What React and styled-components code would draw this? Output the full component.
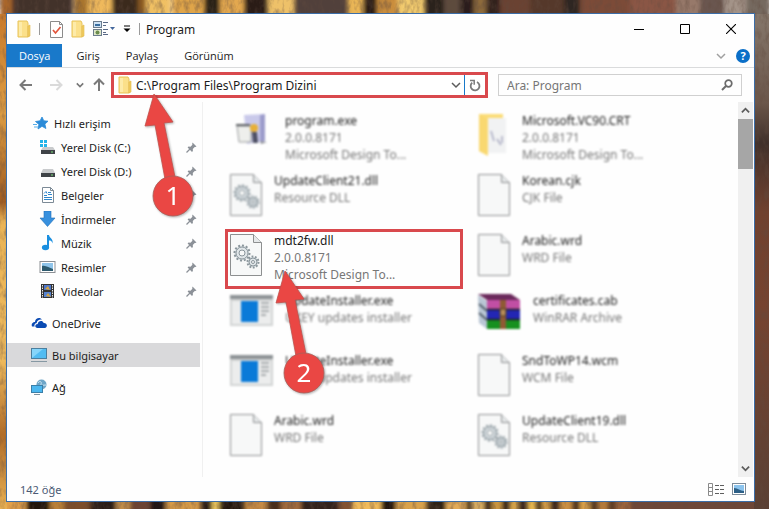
import React from "react";
// Import Styles
import styled, { createGlobalStyle } from "styled-components";

const BLUE = "#1979ca";
const RED = "#d9494d";

// Wallpaper stripes: [x, width, color]
const topStripes = [
  [0, 12, "#a8652a"], [12, 60, "#43332c"], [74, 18, "#a8742f"], [88, 24, "#efb95c"],
  [112, 26, "#3b2a1c"], [138, 14, "#8a5a22"], [146, 24, "#f0c063"], [172, 34, "#e0a548"],
  [204, 16, "#2c2018"], [220, 24, "#e3a850"], [244, 24, "#2a1c14"], [268, 26, "#eec169"],
  [294, 54, "#51403a"], [348, 15, "#eab656"], [363, 14, "#2a1a12"], [377, 22, "#c98d3d"],
  [398, 26, "#f2cb6e"], [424, 20, "#2b211c"], [444, 16, "#5d4b3c"], [460, 14, "#2b1f1a"],
  [474, 12, "#8d6a3a"], [486, 14, "#33241e"], [500, 30, "#6a4331"], [530, 34, "#54382c"],
  [564, 16, "#2f2521"], [580, 50, "#7c4b38"], [630, 46, "#8a5645"], [676, 24, "#97796a"],
  [700, 24, "#6a5750"], [724, 22, "#a39388"], [746, 23, "#75695f"],
];
const bottomStripes = [
  [0, 26, "#e2a04a"], [26, 24, "#23170f"], [50, 14, "#b98038"], [64, 26, "#7d4d2c"],
  [90, 26, "#2b1c14"], [116, 14, "#c08c48"], [130, 20, "#6d4230"], [150, 16, "#241812"],
  [166, 34, "#d59a48"], [200, 12, "#2b1e12"], [212, 7, "#edc85e"], [219, 26, "#20160f"],
  [245, 22, "#c58a44"], [267, 14, "#4a2f1c"], [281, 20, "#a06b3c"], [301, 38, "#33221a"],
  [339, 14, "#845230"], [353, 28, "#f0ba5a"], [381, 15, "#22160f"], [396, 30, "#d9a24c"],
  [426, 20, "#2e2018"], [446, 20, "#e2ab58"], [466, 6, "#36240f"], [472, 12, "#ddb163"],
  [484, 8, "#3a2818"], [492, 10, "#c99540"], [502, 8, "#2c1c12"], [510, 8, "#d8a64c"],
  [518, 10, "#35231a"], [528, 8, "#e8b850"], [536, 6, "#20140c"], [542, 8, "#d69f48"],
  [550, 10, "#3b271a"], [560, 12, "#ca8f42"], [572, 8, "#4b301c"], [580, 10, "#dba24c"],
  [590, 8, "#51341f"], [598, 10, "#b57c3b"], [608, 8, "#5c3a28"], [616, 14, "#a2663a"],
  [630, 139, "#6e4637"],
];

const Wallpaper = () => (
  <StyledWallpaper viewBox="0 0 769 509" preserveAspectRatio="none" aria-hidden="true">
    <defs>
      <linearGradient id="left" x2="0" y2="1">
        <stop offset="0" stopColor="#c87a2c" />
        <stop offset=".2" stopColor="#dc9c42" />
        <stop offset=".38" stopColor="#a05c20" />
        <stop offset=".42" stopColor="#eab456" />
        <stop offset=".7" stopColor="#edb95c" />
        <stop offset=".85" stopColor="#b06c28" />
        <stop offset="1" stopColor="#e8b052" />
      </linearGradient>
      <linearGradient id="right" x2="0" y2="1">
        <stop offset="0" stopColor="#85776b" />
        <stop offset=".18" stopColor="#6b564a" />
        <stop offset=".26" stopColor="#40302a" />
        <stop offset=".4" stopColor="#70412f" />
        <stop offset=".6" stopColor="#764330" />
        <stop offset="1" stopColor="#5a4034" />
      </linearGradient>
      <filter id="soft">
        <feGaussianBlur stdDeviation="2 0" />
      </filter>
      <filter id="fur" x="0" y="0" width="1" height="1">
        <feTurbulence type="fractalNoise" baseFrequency=".2 .1" numOctaves="3" seed="4" />
        <feColorMatrix values="0 0 0 0 .12  0 0 0 0 .07  0 0 0 0 .05  2.6 0 0 0 -1.1" />
      </filter>
    </defs>
    <g filter="url(#soft)">
      {topStripes.map(([x, w, c]) => (
        <rect key={x} x={x} width={w + 1} height="250" fill={c} />
      ))}
      {bottomStripes.map(([x, w, c]) => (
        <rect key={x} x={x} y="250" width={w + 1} height="259" fill={c} />
      ))}
    </g>
    <rect y="14" width="7" height="495" fill="url(#left)" />
    <rect x="754" y="14" width="15" height="495" fill="url(#right)" />
    <rect width="769" height="509" filter="url(#fur)" opacity=".4" />
  </StyledWallpaper>
);

// Icons
const FolderIcon = () => (
  <svg width="14" height="18" viewBox="0 0 14 18">
    <path d="M1 1h9l1 2v14H1z" fill="#fbe08a" stroke="#e8c35a" />
    <path d="M11 6l2-1v11l-2 1z" fill="#f3cf63" stroke="#dfb648" strokeWidth=".6" />
    <path d="M2 2h3v14H2z" fill="#fdeba9" />
  </svg>
);

const CheckDocIcon = () => (
  <svg width="13" height="17" viewBox="0 0 13 17">
    <path d="M.5.5h9l3 3v13H.5z" fill="#fff" stroke="#8b8b8b" />
    <path d="M9.500.5v3h3" fill="none" stroke="#8b8b8b" />
    <path d="M3 9l2.500 3L10.500 6" fill="none" stroke="#e2553c" strokeWidth="1.700" />
  </svg>
);

const PropertiesIcon = () => (
  <svg width="22" height="16" viewBox="0 0 22 16">
    <rect x=".5" y=".5" width="8" height="6" fill="#cfe3f5" stroke="#6c7c8c" />
    <rect x="2" y="3" width="5" height="2" fill="#3a6ea0" />
    <rect x=".5" y="8.500" width="8" height="6" fill="#dfe7c8" stroke="#6c7c8c" />
    <circle cx="4.500" cy="11.500" r="2" fill="#6b8c4c" />
    <path d="M10 1.500h5M10 4.500h3M10 8.500h5M10 13.500h5M10 11.500h3" stroke="#5a6a86" />
    <path d="M17 6h5l-2.500 3z" fill="#44679c" />
  </svg>
);

const CustomizeIcon = () => (
  <svg width="8" height="8" viewBox="0 0 8 8">
    <path d="M1 1h6" stroke="#000" />
    <path d="M.5 3.500h7L4 7z" fill="#000" />
  </svg>
);

const Chevron = ({ size = 10, color = "#5c5c5c", up, weight = 1.5 }) => (
  <svg width={size} height={size} viewBox="0 0 10 10">
    <path
      d={up ? "M1 7l4-4 4 4" : "M1 3l4 4 4-4"}
      fill="none"
      stroke={color}
      strokeWidth={weight}
    />
  </svg>
);

const Arrow = ({ color, turn = 0 }) => (
  <svg width="14" height="14" viewBox="0 0 14 14">
    <path
      d="M13 7H2M6.500 2L1.500 7l5 5"
      fill="none"
      stroke={color}
      strokeWidth="2"
      transform={`rotate(${turn} 7 7)`}
    />
  </svg>
);

const RefreshIcon = () => (
  <svg width="12" height="13" viewBox="0 0 12 13">
    <path d="M8 3A4.400 4.400 0 1 1 3.200 3.600" fill="none" stroke="#7a7a7a" strokeWidth="1.800" />
    <path d="M1 1.500h4.200v4.300" fill="none" stroke="#7a7a7a" strokeWidth="1.500" />
  </svg>
);

const SearchIcon = () => (
  <svg width="12" height="12" viewBox="0 0 12 12">
    <circle cx="7.500" cy="4.500" r="3.300" fill="none" stroke="#6b6b6b" strokeWidth="1.700" />
    <path d="M5 7L1 11" stroke="#6b6b6b" strokeWidth="2" />
  </svg>
);

const PinIcon = () => (
  <svg width="11" height="11" viewBox="0 0 11 11">
    <path d="M6.500.5l4 4-1.200.6-.6-.1-1.900 2 .1 2-.9.9L1.600 5.500l.9-.9 2 .1 1.900-1.900-.2-.8z" fill="#8c9198" />
    <path d="M4 7L.5 10.500" stroke="#8c9198" strokeWidth="1.200" />
  </svg>
);

const sideIcons = {
  star: (
    <>
      <path d="M10 2l1.800 3.800 4.200.4-3.100 2.900 1 4.400-3.900-2.200L6 14l.9-4.600L3.500 6.500l4.600-.7z" fill="#2b8bd8" stroke="#2b8bd8" strokeWidth=".8" />
      <path d="M1 9.500h4M2 12h4" stroke="#57aeea" />
    </>
  ),
  system: (
    <>
      <path d="M1 1h3v3H1zM5 1h3v3H5zM1 5h3v3H1zM5 5h3v3H5z" fill="#22b4ea" />
      <path d="M4 8h10l2 3H2z" fill="#c9cbcd" />
      <path d="M2 11h14v4H2z" fill="#3f4347" />
      <path d="M12 13h2" stroke="#7be07a" />
    </>
  ),
  disk: (
    <>
      <path d="M4 6h10l2 4H2z" fill="#c9cbcd" />
      <path d="M2 10h14v4H2z" fill="#3f4347" />
      <path d="M12 12h2" stroke="#7be07a" />
    </>
  ),
  docs: (
    <>
      <path d="M3.500.5h8l3 3v12h-11z" fill="#fff" stroke="#7c8a96" />
      <path d="M11.500.5v3h3" fill="none" stroke="#7c8a96" />
      <path d="M5 8.500h3M9 5.500h3M9 7.500h4M5 10.500h8M5 12.500h8M5 6.500l2-2 1 2" fill="none" stroke="#2f86cc" />
    </>
  ),
  down: <path d="M5 0h7v7h4l-7.500 8.500L1 7h4z" fill="#3790de" stroke="#2471b8" strokeWidth=".6" />,
  music: (
    <>
      <path d="M8 0h2c.3 3 4.500 3.500 3.500 8.500C13 6 11.500 5.500 10 5.500V12H8z" fill="#1a8fe0" />
      <ellipse cx="6.500" cy="12.500" rx="3.600" ry="2.700" fill="#1a8fe0" />
    </>
  ),
  pictures: (
    <>
      <rect x="1" y="2.500" width="15" height="11" fill="#fff" stroke="#8b8f94" />
      <rect x="3" y="4" width="11" height="8" fill="#8fc4ea" />
      <path d="M3 7c4-1 7 2 11 3v2H3z" fill="#2d5a6e" />
    </>
  ),
  videos: (
    <>
      <path d="M2 1h13v14H2z" fill="#333" />
      <path d="M5 2h7v5H5z" fill="#4f77c8" />
      <path d="M5 9h7v5H5z" fill="#5683cf" />
      <path d="M6 6l3-3 2 4zM7 13l2-3 3 4z" fill="#d7a43c" />
      <path d="M3.500 2v13M13.500 2v13" stroke="#e8e8e8" strokeDasharray="1.500 1" />
    </>
  ),
  onedrive: (
    <>
      <path d="M1 11.500c-1-3 1-4.500 3-4.500 0-4 5-5.500 7-2.500-3-.5-5 1-5.300 3.500C3.500 8.500 3 10 3.600 11.500z" fill="#0b4bb3" />
      <path d="M6.500 13c-3-.2-2.800-4 .2-4 .3-3.500 5-4.200 6-1 3.800-.3 4.300 4.600 1 5z" fill="#0b4bb3" />
    </>
  ),
  pc: (
    <>
      <rect x=".5" y="1.500" width="15" height="10" fill="#52bcf2" stroke="#4b7f9f" />
      <path d="M1 11V2h11z" fill="#86d5fa" />
      <path d="M0 14.500h16" stroke="#8698a3" />
    </>
  ),
  network: (
    <>
      <circle cx="10.500" cy="5.500" r="5" fill="#6ea6c8" />
      <path d="M7 4c2-3 4-1 3 1s3 1 5 1" fill="none" stroke="#d0e6f2" />
      <rect x=".5" y="6.500" width="11" height="7" fill="#4bb7ef" stroke="#3b7fa8" />
      <path d="M3 15.500h6" stroke="#7f929e" />
    </>
  ),
};

const SideIcon = ({ name }) => (
  <svg width="17" height="16" viewBox="0 0 17 16">
    {sideIcons[name]}
  </svg>
);

const Page = ({ children }) => (
  <svg width="32" height="43" viewBox="0 0 32 43">
    <path d="M.5.5h23l8 8v33H.5z" fill="#f7f8f8" stroke="#8d8f90" />
    <path d="M23.500.5v8h8" fill="#e6e9ea" stroke="#8d8f90" />
    {children}
  </svg>
);

const fileIcons = {
  page: <Page />,
  gears: (
    <Page>
      <g fill="#dfe5e8" stroke="#8b969c">
        <circle cx="12" cy="19" r="7.500" strokeWidth="2" strokeDasharray="2 1.900" />
        <circle cx="12" cy="19" r="6" />
        <circle cx="12" cy="19" r="3" fill="#f7f8f8" />
        <circle cx="23" cy="28" r="5.500" strokeWidth="2" strokeDasharray="1.800 1.600" />
        <circle cx="23" cy="28" r="4" />
        <circle cx="23" cy="28" r="1.500" fill="#f7f8f8" />
      </g>
    </Page>
  ),
  app: (
    <svg width="43" height="33" viewBox="0 0 43 33">
      <path d="M0 1h43v31H0z" fill="#d2d4d4" />
      <path d="M0 1h43v4H0z" fill="#8d9295" />
      <path d="M2 7h39v23H2z" fill="#eceded" />
      <path d="M11 7h17v21H11z" fill="#0a7ad8" />
      <path d="M31 9h8M31 13h8M31 17h8M31 21h5" stroke="#a9adaf" strokeWidth="2" />
    </svg>
  ),
  setup: (
    <svg width="43" height="33" viewBox="0 0 43 33">
      <path d="M14 1l21-1v27l-18 3z" fill="#c9c9ea" />
      <path d="M30 1l5-1v27l-5 1z" fill="#9c9ccb" />
      <path d="M7 12h14v16H9z" fill="#eeefec" stroke="#9a9c9e" />
      <path d="M6 11h14" stroke="#5f6266" strokeWidth="2" />
      <circle cx="24" cy="14" r="4" fill="#e8b038" />
      <path d="M22 18h5l1 11h-5z" fill="#4d4f63" />
      <path d="M30 27l7 1-6 2z" fill="#8b8d94" />
    </svg>
  ),
  folder: (
    <svg width="32" height="42" viewBox="0 0 32 42">
      <path d="M1 0h24v6H10v36l-9-5z" fill="#fbdc77" />
      <path d="M10 4h18v35H10z" fill="#f1f2f3" />
      <path d="M13 17l3 10M19 25l4 6M24 22v7" stroke="#a9abc2" strokeWidth="1.500" />
      <path d="M1 0l8 5v36l-8-4z" fill="#f9d870" />
    </svg>
  ),
  archive: (
    <svg width="43" height="36" viewBox="0 0 43 36">
      <path d="M0 0h33l9 6H9z" fill="#6b2a5c" />
      <path d="M0 1l9 6v28l-8-6z" fill="#b9c6d4" />
      <path d="M1 10l8 7M1 19l8 7" stroke="#54606c" strokeWidth="2" />
      <path d="M9 6h33v9H9z" fill="#c14fa4" />
      <path d="M9 16h33v9H9z" fill="#2326b4" />
      <path d="M9 26h33v9H9z" fill="#17901f" />
      <path d="M9 15.500h33M9 25.500h33" stroke="#222" strokeWidth="1.500" />
      <path d="M22 6h6v29h-6z" fill="#8f5a34" />
      <path d="M22 15h6v7h-6z" fill="#b98d58" stroke="#4c3a20" />
    </svg>
  ),
};

const Callout = ({ number, x, y }) => (
  <StyledCallout $x={x} $y={y} width="62" height="126" viewBox="0 0 62 126">
    <path
      d="M20 1L11 33l10-1 10 54 10-2-11-54 9-1z"
      fill="#ea4744"
      stroke="#c2504b"
      strokeWidth=".8"
    />
    <circle cx="39" cy="103" r="20" fill="#ea4744" stroke="#a8605a" strokeWidth=".8" />
    <text x="39" y="112" textAnchor="middle">
      {number}
    </text>
  </StyledCallout>
);

const quickAccess = [
  { icon: "system", name: "Yerel Disk (C:)" },
  { icon: "disk", name: "Yerel Disk (D:)" },
  { icon: "docs", name: "Belgeler" },
  { icon: "down", name: "İndirmeler" },
  { icon: "music", name: "Müzik" },
  { icon: "pictures", name: "Resimler" },
  { icon: "videos", name: "Videolar" },
];

const files = [
  { icon: "setup", name: "program.exe", info: ["2.0.0.8171", "Microsoft Design To..."] },
  { icon: "folder", name: "Microsoft.VC90.CRT", info: ["2.0.0.8171", "Microsoft Design To..."] },
  { icon: "gears", name: "UpdateClient21.dll", info: ["Resource DLL"] },
  { icon: "page", name: "Korean.cjk", info: ["CJK File"] },
  { icon: "gears", name: "mdt2fw.dll", info: ["2.0.0.8171", "Microsoft Design To..."], marked: true },
  { icon: "page", name: "Arabic.wrd", info: ["WRD File"] },
  { icon: "app", name: "UpdateInstaller.exe", info: ["UKEY updates installer"] },
  { icon: "archive", name: "certificates.cab", info: ["WinRAR Archive"] },
  { icon: "app", name: "UpdateInstaller.exe", info: ["UKEY updates installer"] },
  { icon: "page", name: "SndToWP14.wcm", info: ["WCM File"] },
  { icon: "page", name: "Arabic.wrd", info: ["WRD File"] },
  { icon: "gears", name: "UpdateClient19.dll", info: ["Resource DLL"] },
];

const App = () => {
  return (
    <Desktop>
      <GlobalStyle />
      <Wallpaper />
      <Window>
        <TitleBar>
          <QuickTools>
            <FolderIcon />
            <Separator />
            <ToolButton aria-label="Özellikler">
              <CheckDocIcon />
            </ToolButton>
            <ToolButton aria-label="Yeni klasör">
              <FolderIcon />
            </ToolButton>
            <ToolButton aria-label="Görünüm seçenekleri">
              <PropertiesIcon />
            </ToolButton>
            <ToolButton aria-label="Özelleştir">
              <CustomizeIcon />
            </ToolButton>
            <Separator />
          </QuickTools>
          <h1>Program</h1>
          <WindowButton aria-label="Simge durumuna küçült">
            <svg width="10" height="10" viewBox="0 0 10 10">
              <path d="M0 5.500h10" stroke="#000" />
            </svg>
          </WindowButton>
          <WindowButton aria-label="Ekranı kapla">
            <svg width="10" height="10" viewBox="0 0 10 10">
              <path d="M.5.5h9v9h-9z" fill="none" stroke="#000" />
            </svg>
          </WindowButton>
          <WindowButton aria-label="Kapat">
            <svg width="10" height="10" viewBox="0 0 10 10">
              <path d="M0 0l10 10M10 0L0 10" stroke="#000" strokeWidth="1.100" />
            </svg>
          </WindowButton>
        </TitleBar>

        <Ribbon>
          <Tab $file>Dosya</Tab>
          <Tab>Giriş</Tab>
          <Tab>Paylaş</Tab>
          <Tab>Görünüm</Tab>
          <RibbonTools>
            <ToolButton aria-label="Şeridi genişlet">
              <Chevron color="#a0a0a0" />
            </ToolButton>
            <HelpButton aria-label="Yardım">?</HelpButton>
          </RibbonTools>
        </Ribbon>

        <NavBar>
          <NavButtons>
            <ToolButton aria-label="Geri">
              <Arrow color="#7a7a7a" />
            </ToolButton>
            <ToolButton aria-label="İleri">
              <Arrow color="#dadada" turn={180} />
            </ToolButton>
            <ToolButton aria-label="Son konumlar">
              <Chevron size={8} color="#777" weight={2} />
            </ToolButton>
            <ToolButton aria-label="Yukarı">
              <Arrow color="#7a7a7a" turn={90} />
            </ToolButton>
          </NavButtons>
          <AddressBar>
            <FolderIcon />
            <input aria-label="Adres" defaultValue="C:\Program Files\Program Dizini" />
            <ToolButton aria-label="Önceki konumlar">
              <Chevron />
            </ToolButton>
            <RefreshButton aria-label="Yenile">
              <RefreshIcon />
            </RefreshButton>
            <Callout number="1" x={20} y={18} />
          </AddressBar>
          <SearchBar>
            <input aria-label="Ara" placeholder="Ara: Program" />
            <SearchIcon />
          </SearchBar>
        </NavBar>

        <Body>
          <Sidebar>
            <SideLink href="#quick">
              <SideIcon name="star" />
              <span>Hızlı erişim</span>
            </SideLink>
            {quickAccess.map(({ icon, name }) => (
              <SideLink href="#folder" key={name} $nested>
                <SideIcon name={icon} />
                <span>{name}</span>
                <PinIcon />
              </SideLink>
            ))}
            <SideLink href="#onedrive" $root>
              <SideIcon name="onedrive" />
              <span>OneDrive</span>
            </SideLink>
            <SideLink href="#pc" $root $active>
              <SideIcon name="pc" />
              <span>Bu bilgisayar</span>
            </SideLink>
            <SideLink href="#network" $root>
              <SideIcon name="network" />
              <span>Ağ</span>
            </SideLink>
          </Sidebar>
          <FileGrid>
            {files.map(({ icon, name, info, marked }, i) => (
              <FileItem key={i} $marked={marked}>
                {fileIcons[icon]}
                <div>
                  <h2>{name}</h2>
                  {info.map((line) => (
                    <p key={line}>{line}</p>
                  ))}
                </div>
                {marked && <Callout number="2" x={37} y={38} />}
              </FileItem>
            ))}
          </FileGrid>
          <ScrollBar>
            <button aria-label="Yukarı kaydır">
              <Chevron size={9} up weight={2} />
            </button>
            <div className="thumb"></div>
            <button aria-label="Aşağı kaydır">
              <Chevron size={9} weight={2} />
            </button>
          </ScrollBar>
        </Body>

        <StatusBar>
          <span>142 öğe</span>
          <ToolButton aria-label="Ayrıntılar">
            <svg width="17" height="13" viewBox="0 0 17 13">
              <path d="M.5.5h4v12h-4zM.5 4.500h4M.5 8.500h4" fill="none" stroke="#8a8a8a" />
              <path d="M7 2.500h4M12 2.500h4M7 6.500h4M12 6.500h4M7 10.500h4M12 10.500h4" stroke="#5e5e5e" />
            </svg>
          </ToolButton>
          <ToolButton aria-label="Büyük simgeler">
            <svg width="14" height="12" viewBox="0 0 14 12">
              <rect x=".5" y=".5" width="13" height="11" fill="#fff" stroke="#7d8c9a" />
              <path d="M2 2h10v8H2z" fill="#8cc4ee" />
              <path d="M2 5c4 0 6 3 10 3v2H2z" fill="#2c5f86" />
            </svg>
          </ToolButton>
        </StatusBar>
      </Window>
    </Desktop>
  );
};

const GlobalStyle = createGlobalStyle`
  * {
    margin: 0;
    padding: 0;
    box-sizing: border-box;
  }
  body, button, input {
    font-family: "Noto Sans", "Open Sans", sans-serif;
    font-size: 12px;
    color: #1c1c1c;
  }
  button, input {
    border: none;
    background: none;
    outline: none;
  }
  svg {
    display: block;
    flex-shrink: 0;
  }
`;

const Desktop = styled.div`
  position: relative;
  display: flex;
  min-height: 100vh;
  padding: 13px 14px 7px 6px;
`;
const StyledWallpaper = styled.svg`
  position: absolute;
  inset: 0;
  width: 100%;
  height: 100%;
`;
const Window = styled.main`
  position: relative;
  flex: 1;
  display: flex;
  flex-direction: column;
  min-width: 0;
  background: #fefefe;
  border: 1px solid #3c6ea8;
`;
const TitleBar = styled.header`
  display: flex;
  align-items: center;
  height: 30px;
  h1 {
    flex: 1;
    font-size: 12px;
    font-weight: 400;
  }
`;
const QuickTools = styled.div`
  display: flex;
  align-items: center;
  gap: 8px;
  padding: 0 6px 0 10px;
`;
const Separator = styled.span`
  width: 1px;
  height: 12px;
  margin-right: 2px;
  background: #9a9a9a;
  &:last-child {
    margin-right: 0;
  }
`;
const ToolButton = styled.button`
  display: flex;
  align-items: center;
  justify-content: center;
`;
const WindowButton = styled(ToolButton)`
  width: 46px;
  height: 28px;
`;

const Ribbon = styled.nav`
  display: flex;
  gap: 2px;
  height: 24px;
  border-bottom: 1px solid #dadbdc;
`;
const Tab = styled.button`
  padding: 0 12px;
  font-family: "Open Sans", sans-serif;
  font-size: 11px;
  color: ${({ $file }) => ($file ? "#fff" : "#1c1c1c")};
  background: ${({ $file }) => ($file ? BLUE : "none")};
`;
const RibbonTools = styled.div`
  display: flex;
  align-items: center;
  gap: 10px;
  margin-left: auto;
  padding-right: 4px;
`;
const HelpButton = styled.button`
  width: 14px;
  height: 14px;
  border-radius: 50%;
  background: #0b6fc8;
  color: #fff;
  font-size: 11px;
  font-weight: 700;
  line-height: 14px;
`;

const NavBar = styled.div`
  display: flex;
  align-items: center;
  height: 34px;
  padding-right: 12px;
`;
const NavButtons = styled.div`
  display: flex;
  align-items: center;
  gap: 16px;
  padding: 0 5px 0 12px;
  button:nth-child(n + 3) {
    margin-left: -3px;
  }
  button:last-child {
    margin-left: -8px;
  }
`;
const AddressBar = styled.div`
  position: relative;
  z-index: 2;
  flex: 1;
  display: flex;
  align-items: center;
  height: 26px;
  margin-right: 10px;
  padding-left: 4px;
  border: 3px solid ${RED};
  background: #fff;
  input {
    flex: 1;
    min-width: 0;
    padding-left: 4px;
  }
`;
const RefreshButton = styled(ToolButton)`
  align-self: stretch;
  width: 21px;
  margin-left: 3px;
  border-left: 1px solid ${BLUE};
`;
const SearchBar = styled.div`
  display: flex;
  align-items: center;
  width: 244px;
  height: 22px;
  padding: 0 8px;
  border: 1px solid #d0d0d0;
  input {
    flex: 1;
    min-width: 0;
  }
  input::placeholder {
    color: #767676;
  }
`;

const Body = styled.div`
  flex: 1;
  display: flex;
`;
const Sidebar = styled.nav`
  width: 196px;
  padding: 9px 2px 0 0;
  border-right: 1px solid #f0f0f0;
`;
const SideLink = styled.a`
  display: flex;
  align-items: center;
  gap: ${({ $root }) => ($root ? "4px" : "5px")};
  height: 24px;
  margin-top: ${({ $root }) => ($root ? "8px" : "0")};
  padding: 0 3px 0 ${({ $nested, $root }) => ($nested ? "32px" : $root ? "24px" : "25px")};
  background: ${({ $active }) => ($active ? "#d9d9db" : "none")};
  color: #1c1c1c;
  font-size: 11px;
  text-decoration: none;
  span {
    flex: 1;
  }
`;

const FileGrid = styled.ul`
  flex: 1;
  display: grid;
  grid-template-columns: repeat(auto-fill, 238px);
  grid-auto-rows: 60px;
  column-gap: 10px;
  padding: 7px 0 0 22px;
  list-style: none;
`;
const FileItem = styled.li`
  position: relative;
  z-index: ${({ $marked }) => ($marked ? 1 : 0)};
  display: flex;
  gap: 12px;
  padding: 0 2px;
  border: 3px solid ${({ $marked }) => ($marked ? RED : "transparent")};
  filter: ${({ $marked }) => ($marked ? "none" : "blur(0.1em)")};
  h2,
  p {
    font-size: 12px;
    font-weight: 400;
    line-height: 17px;
  }
  p {
    color: #777;
  }
  > svg:first-child {
    margin-top: 2px;
  }
`;
const StyledCallout = styled.svg`
  position: absolute;
  left: ${({ $x }) => $x}px;
  top: ${({ $y }) => $y}px;
  filter: drop-shadow(1px 1px 1px rgba(0, 0, 0, 0.3));
  pointer-events: none;
  text {
    fill: #fff;
    font-size: 26px;
  }
`;

const ScrollBar = styled.div`
  display: flex;
  flex-direction: column;
  width: 16px;
  border-right: 1px solid #fefefe;
  background: #f0f0f0;
  button {
    display: flex;
    align-items: center;
    justify-content: center;
    height: 17px;
  }
  .thumb {
    height: 50px;
    margin-bottom: auto;
    background: #a6a6a6;
  }
`;

const StatusBar = styled.footer`
  display: flex;
  align-items: center;
  gap: 7px;
  height: 24px;
  padding: 0 8px 0 13px;
  span {
    flex: 1;
    font-size: 11px;
    color: #4b5a75;
  }
`;

export default App;
